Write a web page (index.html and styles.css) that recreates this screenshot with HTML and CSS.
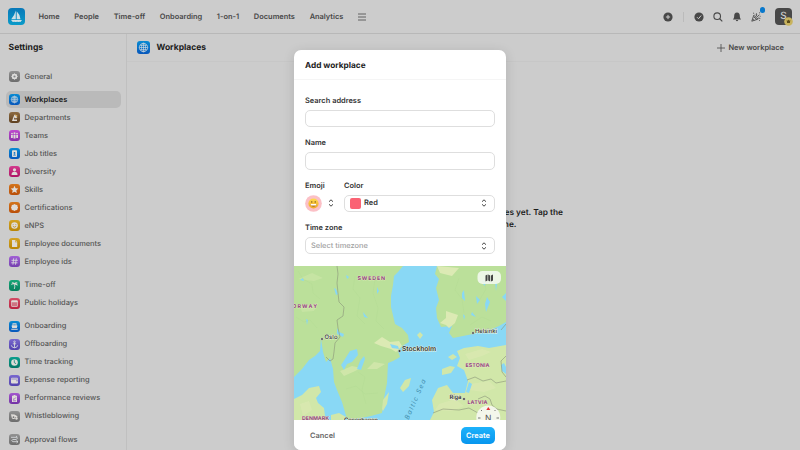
FILE: index.html
```html
<!DOCTYPE html>
<html lang="en">
<head>
<meta charset="utf-8">
<title>Workplaces</title>
<link rel="stylesheet" href="styles.css">
</head>
<body>
<header class="topbar">
  <svg class="logo" viewBox="0 0 17 17"><defs><linearGradient id="lg" x1="0" y1="0" x2="0" y2="1"><stop offset="0" stop-color="#0878b8"/><stop offset="1" stop-color="#0a9bc9"/></linearGradient></defs><rect width="17" height="17" rx="4" fill="url(#lg)"/><path d="M7.800 2.500v8.700H3.200Q6.500 7.500 7.800 2.500zM8.700 3.200q3.400 3.300 3.800 8H8.700zM3 12h11l-1.500 2q-1-.7-2 0-1.500-.7-2.700 0-1.500-.7-3 0z" fill="#cfdfe5"/></svg>
  <nav class="nav"><a>Home</a><a>People</a><a>Time-off</a><a>Onboarding</a><a>1-on-1</a><a>Documents</a><a>Analytics</a>
    <svg class="menu" viewBox="0 0 8 8"><path d="M0 1h8M0 4h8M0 7h8" stroke="#555" stroke-width=".9"/></svg></nav>
  <div class="actions">
    <svg class="i-add" viewBox="0 0 10 10"><circle cx="5" cy="5" r="4.600" fill="#484848"/><path d="M5 2.900v4.200M2.900 5h4.200" stroke="#ccc"/></svg>
    <span class="divider"></span>
    <svg class="i-check" viewBox="0 0 10 10"><circle cx="5" cy="5" r="4.600" fill="#484848"/><path d="M3 5.200l1.500 1.500L7.200 3.500" fill="none" stroke="#ccc"/></svg>
    <svg class="i-search" viewBox="0 0 10 10"><circle cx="4.200" cy="4.200" r="3.300" fill="none" stroke="#484848" stroke-width="1.100"/><path d="M6.600 6.600L9.300 9.300" stroke="#484848" stroke-width="1.200"/></svg>
    <svg class="i-bell" viewBox="0 0 10 10"><path d="M5 .6c-2 .2-2.800 1.600-2.800 3.200 0 2-.5 2.600-1.300 3.700h8.200C8.300 6.400 7.800 5.800 7.800 3.800 7.800 2.200 7 .8 5 .6zM3.700 8.100h2.600Q5 10.500 3.700 8.100z" fill="#484848"/></svg>
    <span class="party"><svg viewBox="0 0 10 10"><path d="M2.800 3.200L.8 9.200l6-2zM3 5l2.700 2.500M1.800 7l1.300 1.400" fill="none" stroke="#484848" stroke-width=".9"/><path d="M4.700 4.700q1.800-1.500.7-3.400M5.800 5.300l2.700-2.700M6.300 6.500q1.500-1 3 0M2 1.200h.9M8 .8h.9M8.700 4.300h.9M3.700 2.300l.7.500M8 8.500h.8" fill="none" stroke="#484848" stroke-width=".9"/></svg><i></i></span>
    <span class="avatar">S<svg viewBox="0 0 9 9"><circle cx="4.500" cy="4.500" r="4.300" fill="#c8b35d"/><path d="M2.700 3l1 .8.800-1.200.8 1.200 1-.8-.4 3H3.100z" fill="#5b4b18"/></svg></span>
  </div>
</header>
<div class="body">
  <aside class="side">
    <h1>Settings</h1>
    <ul>
      <li class="gap"><svg viewBox="0 0 11 11" class="gray"><circle cx="5.500" cy="5.500" r="2.700" class="f"/><path d="M5.500 2v7M2 5.500h7M3 3l5 5M8 3L3 8" class="s"/><circle cx="5.500" cy="5.500" r="1.100" fill="#888"/></svg>General</li>
      <li class="on"><svg viewBox="0 0 11 11" class="blue"><circle cx="5.500" cy="5.500" r="3.300" class="s"/><ellipse cx="5.500" cy="5.500" rx="1.500" ry="3.300" class="s"/><path d="M2.200 5.500h6.600M5.500 2.200v6.600M2.800 3.800h5.400M2.800 7.200h5.400" class="s"/></svg>Workplaces</li>
      <li><svg viewBox="0 0 11 11" class="brown"><path d="M3 9l1-3 1.500-3.500L8.500 5 7 6.500 5.300 5.500 5 7.500h3V9z" class="f"/><path d="M6 2.300l2.500 1.200-1 1.700z" fill="#e2b35b"/></svg>Departments</li>
      <li><svg viewBox="0 0 11 11" class="purple"><circle cx="3" cy="3.600" r=".9" class="f"/><circle cx="5.500" cy="3.300" r="1" class="f"/><circle cx="8" cy="3.600" r=".9" class="f"/><path d="M2 5h1.800v3H2zM4.500 4.700h2v3.800h-2zM7.200 5H9v3H7.200z" class="f"/></svg>Teams</li>
      <li><svg viewBox="0 0 11 11" class="blue"><rect x="3" y="2.300" width="5" height="6.700" rx=".8" class="f"/><circle cx="5.500" cy="4.900" r=".9" fill="#0870c4"/><path d="M4 7.600q1.500-2.600 3 0z" fill="#0870c4"/></svg>Job titles</li>
      <li><svg viewBox="0 0 11 11" class="pink"><circle cx="5.500" cy="3.800" r="1.600" class="f"/><path d="M2.500 9q0-3.200 3-3.200T8.500 9z" class="f"/></svg>Diversity</li>
      <li><svg viewBox="0 0 11 11" class="orange"><path d="M5.500 1.800l1.100 2.500 2.700.3-2 1.800.6 2.700-2.400-1.400-2.400 1.400.6-2.700-2-1.800 2.700-.3z" class="f"/></svg>Skills</li>
      <li><svg viewBox="0 0 11 11" class="orange"><path d="M5.500 2l1.300.7 1.500.3.200 1.500.6 1-.6 1.200-.3 1.400-1.500.2-1.200.7-1.200-.7-1.500-.2-.3-1.400L2 5.500l.6-1.200.2-1.300 1.500-.3z" class="f"/></svg>Certifications</li>
      <li><svg viewBox="0 0 11 11" class="yellow"><circle cx="5.500" cy="5.500" r="3.300" class="f"/><path d="M4.200 4.300v.8M6.800 4.300v.8M3.800 6.300q1.700 1.800 3.400 0" fill="none" stroke="#b98813" stroke-width=".8"/></svg>eNPS</li>
      <li><svg viewBox="0 0 11 11" class="yellow"><path d="M3 2h3v2.200h2.200V9H3zM6.500 2l1.700 1.700H6.500z" class="f"/></svg>Employee documents</li>
      <li class="gap"><svg viewBox="0 0 11 11" class="violet"><path d="M4.700 2.300l-.8 6.400M7.300 2.300l-.8 6.400M2.500 4.300h6.300M2.200 6.800h6.300" class="s bold"/></svg>Employee ids</li>
      <li><svg viewBox="0 0 11 11" class="green"><path d="M5.500 4.500q.7 2.500-.2 4.500" class="s bold"/><path d="M2 5q.3-2 2-1.700-1-.7-1.700-.3Q3.500 1.500 5.400 3q2-1.500 3.600.3-1.500-.3-2 .2 2 .5 1.600 2.200Q7.500 4.600 5.400 4.400 3.500 4 2 5z" class="f"/></svg>Time-off</li>
      <li class="gap"><svg viewBox="0 0 11 11" class="red"><rect x="2.200" y="2.300" width="6.600" height="6.400" rx="1" class="f"/><path d="M2.800 4.300h5.400v3.600H2.800z" fill="#c43a55" opacity=".65"/></svg>Public holidays</li>
      <li><svg viewBox="0 0 11 11" class="blue"><path d="M3.500 2.300h4v2l1 .5-.7 2.200H3.200l-.7-2.200 1-.5zM2.300 7.700h6.400v1H2.300z" class="f"/><path d="M4.200 3.500h2.600v.7H4.200z" fill="#0870c4"/></svg>Onboarding</li>
      <li><svg viewBox="0 0 11 11" class="indigo"><circle cx="5.500" cy="2.800" r=".8" class="s bold"/><path d="M5.500 3.600v5.200M3.800 4.800h3.400M2.300 6.300q.5 2.400 3.200 2.500 2.700-.1 3.200-2.500" class="s bold"/></svg>Offboarding</li>
      <li><svg viewBox="0 0 11 11" class="teal"><circle cx="5.500" cy="5.500" r="3.300" class="f"/><path d="M5.300 3.200v2.500l1.800 1" fill="none" stroke="#078374" stroke-width=".8"/></svg>Time tracking</li>
      <li><svg viewBox="0 0 11 11" class="indigo"><rect x="2" y="2.700" width="7" height="5.800" rx="1" class="f"/><path d="M2.300 4h6.500M7 5.800h2" stroke="#6455ba" stroke-width=".6"/></svg>Expense reporting</li>
      <li><svg viewBox="0 0 11 11" class="plum"><path d="M3 2.700h1.300l.5-.8h1.400l.5.800H8V9H3z" class="f"/><path d="M4 5.700l1 .8 1.800-2M4 7.800h3" fill="none" stroke="#8443b5" stroke-width=".7"/></svg>Performance reviews</li>
      <li class="gap"><svg viewBox="0 0 11 11" class="gray"><path d="M2 3.200l3.500.2 3 1.800-.5 1.500-2-.8q.5 2.300-1.500 2.200T2.500 5.800z" class="f"/><circle cx="4.500" cy="6.200" r=".9" fill="#777"/><circle cx="7.500" cy="7.500" r="1.200" class="f"/></svg>Whistleblowing</li>
      <li><svg viewBox="0 0 11 11" class="gray"><path d="M2 3.300h5.500q1.500 1-.2 2.200H3.700q-1.700 1 0 2.200H9M7 2l1.500 1.300M7.500 6.500L9 7.700 7.500 9" class="s bold"/></svg>Approval flows</li>
    </ul>
  </aside>
  <main>
    <div class="page-head">
      <svg class="blue" viewBox="0 0 11 11"><circle cx="5.500" cy="5.500" r="3.600" class="s"/><ellipse cx="5.500" cy="5.500" rx="1.700" ry="3.600" class="s"/><path d="M1.900 5.500h7.200M5.500 1.900v7.200M2.600 3.700h5.800M2.600 7.300h5.800" class="s"/></svg>
      <h2>Workplaces</h2>
      <span class="new"><svg viewBox="0 0 8 8"><path d="M4 0v8M0 4h8" stroke="#484848" stroke-width=".8"/></svg>New workplace</span>
    </div>
    <p class="empty">There are no workplaces yet. Tap the<br>button to create one.</p>
  </main>
</div>
<section class="modal">
  <h3>Add workplace</h3>
  <form>
    <label>Search address</label><div class="field"></div>
    <label>Name</label><div class="field"></div>
    <div class="pair">
      <div class="emoji-col"><label>Emoji</label>
        <div class="emoji"><svg class="face" viewBox="0 0 18 18"><defs><linearGradient id="fg" x1="0" y1="0" x2="0" y2="1"><stop offset="0" stop-color="#ffdc4e"/><stop offset="1" stop-color="#f0a728"/></linearGradient></defs><circle cx="9" cy="9" r="8.800" fill="#fbc0c6"/><circle cx="9" cy="9" r="5.400" fill="url(#fg)"/><ellipse cx="7.200" cy="7.300" rx=".6" ry="1" fill="#7e5b18"/><ellipse cx="10.800" cy="7.300" rx=".6" ry="1" fill="#7e5b18"/><path d="M5.700 9.500h6.600q-.5 2.900-3.300 2.900T5.700 9.500z" fill="#a8702a"/><path d="M5.900 9.600h6.200l-.5 1.600H6.400z" fill="#fff"/></svg>
        <svg class="chev" viewBox="0 0 6 8"><path d="M1 2.700L3 .8l2 1.900M1 5.300l2 1.900 2-1.900"/></svg></div></div>
      <div class="color-col"><label>Color</label><div class="field"><i class="swatch"></i>Red<svg class="chev" viewBox="0 0 6 8"><path d="M1 2.700L3 .8l2 1.900M1 5.300l2 1.900 2-1.900"/></svg></div></div>
    </div>
    <label>Time zone</label><div class="field ph">Select timezone<svg class="chev" viewBox="0 0 6 8"><path d="M1 2.700L3 .8l2 1.900M1 5.300l2 1.900 2-1.900"/></svg></div>
  </form>
  <svg class="map" viewBox="0 0 212 154">
    <rect width="212" height="154" fill="#89d8f5"/>
    <g fill="#bbe09a">
      <path d="M0 0H109L104 6 100 10 99 19 97 30 97 41 101 58 108 62 114 69 115 76 108 80 104 85 106 91 99 95 94 97 93 117 90 132 88 147 77 150 62 153H53L48 136 43 124 40 116 39 103 36 92 32 96 29 86 27 73 26 85 21 90 15 94 8 103 0 111z"/>
      <path d="M143 0H212V56L205 60 196 64 188 65 179 68 159 72 155 67 158 60 147 61 143 52 142 42 145 34 142 22 145 13 141 8z"/>
    </g>
    <g fill="#d1e7a9">
      <path d="M163 85L170 82 184 80 195 82 212 79V154H136L140 146 138 134 144 122 153 119 159 127 171 127 174 115 170 104 163 100 166 92z"/>
      <path d="M0 133L8 129 15 122 25 120 27 126 22 132 24 137 30 142 31 150 35 154H0z"/>
      <path d="M37 149l8-2 7 4-2 3H37z"/>
      <path d="M106 122l5-8 6-2-2 8-6 6zM88 143l1-9 6-8-2 12-4 7zM148 103l8-3 5 1-4 6-9 2zM154 91l5-3 4 3-5 3zM123 69l3-3 3 3-3 4z"/>
    </g>
    <g fill="#dceab4">
      <path d="M88 71l8 5 9-1 3 5-6 6-5-3-10-3-7-3zM143 0l22 2-7 8-12-3zM152 45l12 4-3 8-6 5-3-3-6-2 6-5z"/>
      <path d="M46 105l12-5 9 2-8 4-9 4zM73 103l7-7 11 2-8 5zM171 88l17-5 9 3-9 4-13 4zM177 118l18-3 7 7-12 4-15-2zM145 138l16-5 9 7-12 5-17-1zM6 138l9-3 3 9-9 6z" opacity=".6"/>
      <path d="M4 13l14-6 11 5-9 3zM6 40l18-3-4 8-12 1z" opacity=".35"/>
    </g>
    <g fill="#89d8f5">
      <path d="M47 99l4-6 5-8 7-2 1 6-6 7-5 2-3 6zM63 103l3-8 4-5 1 3-4 11zM40 22l2 1 2 5-2 1zM69 46l5 6-4-1zM6 14l3-2 1 3zM83 21l2 4-2 3zM43 62l2 4 5 2-1 3-6-3zM12 53l2 1-1 5zM52 9l3 2-2 2z"/>
      <path d="M168 27l2-3 1 11-3-3zM182 30l4 4-3 4zM193 31l3 5-4 10-1-8zM178 46l4 5-5-2zM201 16l2 2-1 7zM208 31l4-4v8zM169 48l2 2-1 4zM199 5l3 2-4 2zM188 14l4 1-1 5-2-2zM207 99l3-2 2 4v7l-4-3z"/>
      <path d="M96 78l8 2 1 3-7-1zM172 126l3-10 3 2-3 9z"/>
    </g>
    <g fill="none" stroke="#8a9378" stroke-width=".6">
      <path d="M43 0l1 8-1 9 1 10 1 9 5 5-1 9-6 4 1 8 2 9-5 6-1 9-1 7-3 2-4-4M173 114l8-3 8 4 8-2 5 4 10-2M139 147l10-4 16 1 10-2 9 5 14-5 14 3M212 58l-5 6M212 90l-5 5 1 11 4 5M184 133l7-3 5 3 2 6 6 5"/>
    </g>
    <g fill="none" stroke="#a7d38b" stroke-width=".6" opacity=".3"><path d="M4 5l5 8 9 5 1 9 7 6M2 51l8 5 6-2 7 8M61 10l-2 13 7 9-3 18 8 8M82 6l-3 21 5 15-2 13 8 8M165 12l-4 12 7 9 2 14M188 6l4 17-7 12M176 59l12-8 9 4M52 123l10-3 9 8 13-1M64 106l7 5-3 13 4 14"/></g>
    <g class="country">
      <text x="63.500" y="14" textLength="27.500">SWEDEN</text><text x="-7" y="42" textLength="30">NORWAY</text><text x="171.500" y="101" textLength="24">ESTONIA</text><text x="173.500" y="138" textLength="20">LATVIA</text><text x="8" y="154.200" textLength="27">DENMARK</text>
    </g>
    <text class="sea" transform="translate(114.500 154) rotate(-66)" textLength="43">Baltic Sea</text>
    <g class="city"><text x="30.500" y="72.500" textLength="13">Oslo</text><text x="181" y="67" textLength="22">Helsinki</text><text x="155.500" y="132.500" textLength="12" class="w">Riga</text><text x="50" y="156" textLength="34" class="w">Copenhagen</text><text x="108" y="84.700" class="big" textLength="34">Stockholm</text></g>
    <g fill="#333" stroke="#fff" stroke-width=".4"><circle cx="28" cy="73" r="1.200"/><circle cx="105.500" cy="85" r="1.300"/><circle cx="179" cy="67" r="1.200"/><circle cx="170" cy="133" r="1.300"/></g>
    <rect x="183.500" y="5" width="23.500" height="13" rx="5" fill="#eff7ea" opacity=".95"/><path d="M191.500 9.500l2-1v6l-2 1zM194.200 8.500l2 1v6l-2-1zM197 9.500l2-1v6l-2 1z" fill="#444"/>
    <circle cx="194.300" cy="151.500" r="12" fill="#f5f8ef" opacity=".94"/><path d="M194.300 141l2 3h-4z" fill="#e33235"/><text x="191" y="155" class="compass">N</text><path d="M184 152h2.500M202.500 152h2.500M187 144l1 1M201.500 144l-1 1" stroke="#555" stroke-width=".8"/>
  </svg>
  <footer><span>Cancel</span><button>Create</button></footer>
</section>
</body>
</html>
```
FILE: styles.css
```css
* { box-sizing: border-box; }
body { margin: 0; width: 800px; height: 450px; overflow: hidden; background: #ccc; color: #484848; font: 600 7.450px/12px Inter, sans-serif; text-rendering: geometricPrecision; }
h1, h2, h3, p, ul { margin: 0; padding: 0; }
svg { display: block; flex: none; }
.topbar { display: flex; align-items: center; height: 34px; padding: 0 8px; border-bottom: 1px solid #b8b8b8; }
.logo { width: 17px; height: 17px; }
.nav { display: flex; align-items: center; gap: 14.700px; margin-left: 13.500px; }
.nav a { padding-top: 1px; }
.menu { width: 8px; height: 8px; margin-left: -.5px; }
.actions { display: flex; align-items: center; margin-left: auto; }
.actions svg { width: 10px; height: 10px; }
.divider { width: 1px; height: 10px; margin: 0 10px; background: #bbb; }
.i-search, .i-bell { margin-left: 9px; }
.party { position: relative; margin: 0 14px 0 9px; }
.party i { position: absolute; left: 8.500px; top: -4.500px; width: 5.500px; height: 5.500px; border-radius: 50%; background: #0878cc; }
.avatar { position: relative; width: 17px; height: 17px; border-radius: 4px; background: #484848; color: #ccc; text-align: center; font: 500 10px/17px Inter, sans-serif; }
.actions .avatar svg { position: absolute; width: 9px; height: 9px; left: 9px; top: 9px; }
.body { display: flex; height: 416px; }
.side { width: 127px; padding: 7px 6px; border-right: 1px solid #c0c0c0; }
h1 { margin-left: 2.500px; font-size: 8.600px; line-height: 14px; color: #1c1c1c; }
ul { margin-top: 13px; list-style: none; }
li { display: flex; align-items: center; gap: 4.500px; width: 115px; height: 17px; padding-left: 3px; margin-bottom: 1px; border-radius: 5px; color: #555; font-weight: 500; }
li svg { width: 11px; height: 11px; border-radius: 3px; }
li.gap { margin-bottom: 6.300px; }
li.on { background: #bababa; color: #1c1c1c; font-weight: 600; }
.s { fill: none; stroke: #d9dddf; stroke-width: .55; }
.bold { stroke-width: .85; }
.f { fill: #dfdcd8; }
.gray { background: linear-gradient(#929292, #6c6c6c); }
.blue { background: linear-gradient(#088bd3, #0857bb); }
.brown { background: linear-gradient(#8d6b42, #5e4020); }
.purple { background: linear-gradient(#c04bd0, #8931a7); }
.pink { background: linear-gradient(#d33a8d, #ad1464); }
.orange { background: linear-gradient(#d4751c, #b94e08); }
.yellow { background: linear-gradient(#d4a324, #b98506); }
.violet { background: linear-gradient(#a160d5, #7441af); }
.green { background: linear-gradient(#16a778, #087e5c); }
.red { background: linear-gradient(#d44b65, #b92240); }
.indigo { background: linear-gradient(#7968cf, #5142ad); }
.teal { background: linear-gradient(#0b9f8e, #057565); }
.plum { background: linear-gradient(#a356ce, #7231a5); }
main { flex: 1; }
.page-head { display: flex; align-items: center; height: 28px; padding: 0 16px 0 10px; border-bottom: 1px solid #c7c7c7; }
.page-head > svg { width: 13px; height: 13px; border-radius: 3px; }
h2 { margin-left: 6.500px; padding-top: 1px; font-size: 8.500px; color: #1c1c1c; }
.new { display: flex; align-items: center; gap: 3.500px; margin-left: auto; }
.new svg { width: 8px; height: 8px; }
.empty { width: 436px; margin: 144.500px 0 0; text-align: right; font-size: 8.300px; line-height: 12.500px; color: #1c1c1c; }
.empty::after { content: ""; display: inline-block; width: 46.500px; }
.modal { position: absolute; left: 294px; top: 50px; width: 212px; height: 400px; overflow: hidden; border-radius: 7px; background: #fff; color: #333; box-shadow: 0 2px 12px #0002; }
h3 { height: 30px; padding-left: 11px; border-bottom: 1px solid #f5f5f5; font-size: 8.250px; line-height: 31px; color: #222; }
form { height: 186px; padding: 14px 11px 0; }
label { display: block; margin-bottom: 4px; height: 12px; line-height: 13px; }
.field { display: flex; align-items: center; height: 17.300px; margin-bottom: 9px; padding: 0 7px 0 5px; border: 1px solid #dedede; border-radius: 5px; }
.pair { display: flex; }
.emoji-col { width: 39px; }
.color-col { flex: 1; }
.emoji { display: flex; align-items: center; gap: 6px; }
.face { width: 17px; height: 17px; }
.chev { width: 6px; height: 8px; fill: none; stroke: #444; stroke-width: 1; }
.field .chev { margin-left: auto; }
.swatch { width: 11px; height: 11px; margin-right: 3px; border-radius: 2px; background: #fa6374; }
.ph { color: #a1a1a1; font-weight: 500; }
.map { width: 212px; height: 154px; }
.country { fill: #93437f; font: 700 5.300px Inter, sans-serif; stroke: #eff0cf; stroke-width: .5; paint-order: stroke; }
.city { fill: #333; font: 500 6px Inter, sans-serif; stroke: #edf4df; stroke-width: .8; paint-order: stroke; }
.city .big { font-size: 6.800px; font-weight: 600; }
.city .w { font-weight: 600; }
.sea { fill: #438eae; font: italic 400 6.500px Inter, sans-serif; }
.compass { fill: #555; font: 400 8.500px Inter, sans-serif; }
footer { display: flex; align-items: center; justify-content: space-between; height: 30px; padding: 0 11px 0 16px; background: #fff; color: #666; }
footer span { padding-top: 1px; }
button { width: 34px; height: 17px; padding: 0; border: 0; border-radius: 5px; background: linear-gradient(#1db2fb, #0896ee); color: #fff; font: 600 7.450px Inter, sans-serif; text-rendering: geometricPrecision; }
```
